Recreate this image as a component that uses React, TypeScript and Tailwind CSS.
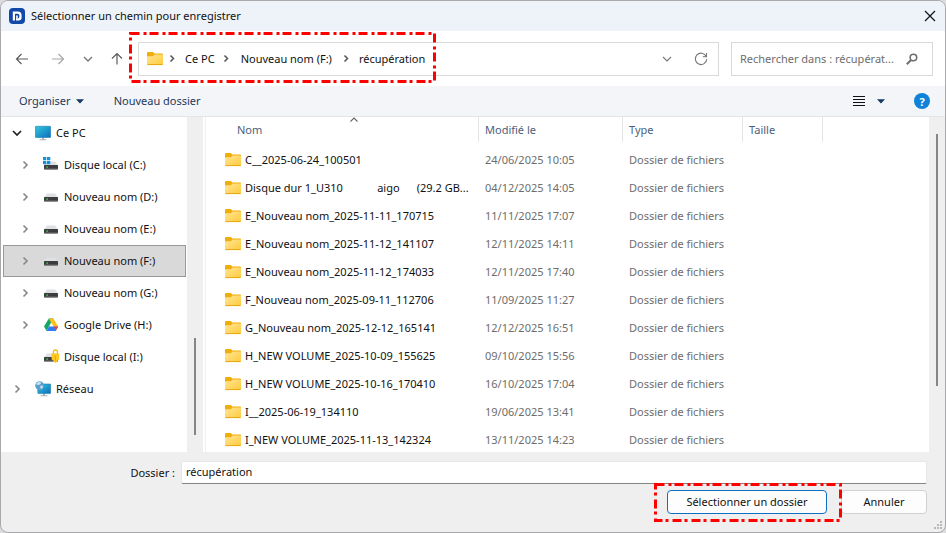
import type { ReactNode } from "react";

const files = [
  ["C__2025-06-24_100501", "24/06/2025 10:05"],
  ["Disque dur 1_U310            aigo      (29.2 GB...", "04/12/2025 14:05"],
  ["E_Nouveau nom_2025-11-11_170715", "11/11/2025 17:07"],
  ["E_Nouveau nom_2025-11-12_141107", "12/11/2025 14:11"],
  ["E_Nouveau nom_2025-11-12_174033", "12/11/2025 17:40"],
  ["F_Nouveau nom_2025-09-11_112706", "11/09/2025 11:27"],
  ["G_Nouveau nom_2025-12-12_165141", "12/12/2025 16:51"],
  ["H_NEW VOLUME_2025-10-09_155625", "09/10/2025 15:56"],
  ["H_NEW VOLUME_2025-10-16_170410", "16/10/2025 17:04"],
  ["I__2025-06-19_134110", "19/06/2025 13:41"],
  ["I_NEW VOLUME_2025-11-13_142324", "13/11/2025 14:23"],
];

function Folder() {
  return (
    <svg width="16" height="14" viewBox="0 0 16 14" className="shrink-0">
      <defs>
        <linearGradient id="folder" x1="0" y1="0" x2="1" y2="1">
          <stop offset="0" stopColor="#ffe596" />
          <stop offset="1" stopColor="#ffcb3d" />
        </linearGradient>
      </defs>
      <path d="M0 1Q0 0 1 0H5.8L7.6 1.6H15Q16 1.6 16 2.6V6H0Z" fill="#f0ad0c" />
      <path d="M0 5Q0 4.2 1 4.2H5.8L7.6 2.4H15Q16 2.4 16 3.2V12Q16 13 15 13H1Q0 13 0 12Z" fill="url(#folder)" />
      <path d="M.4 12.6H15.6" stroke="#e8a613" />
    </svg>
  );
}

function Chevron({ dir, color, width = 1.5 }: { dir: "right" | "down" | "up"; color: string; width?: number }) {
  const d = dir === "right" ? "M3.5 1.5L7 5L3.5 8.5" : dir === "down" ? "M1 3L5 7L9 3" : "M1.5 6.5L5 3L8.5 6.5";
  return (
    <svg width="10" height="10" viewBox="0 0 10 10" fill="none" stroke={color} strokeWidth={width} className="shrink-0">
      <path d={d} />
    </svg>
  );
}

function Crumb() {
  return (
    <svg width="22" height="10" viewBox="0 0 22 10" fill="none" stroke="#555" strokeWidth="1.5" className="shrink-0">
      <path d="M7.5 1.5L10.5 4.5L7.5 7.5" />
    </svg>
  );
}

function Caret() {
  return (
    <svg width="8" height="5" viewBox="0 0 8 5">
      <path d="M0 .3H8L4 4.6Z" fill="#163a64" />
    </svg>
  );
}

function Highlight({ className }: { className: string }) {
  return (
    <svg className={`pointer-events-none absolute ${className}`} aria-hidden="true">
      <rect
        x="1.5"
        y="1.5"
        className="h-[calc(100%-3px)] w-[calc(100%-3px)]"
        fill="none"
        stroke="#fe0000"
        strokeWidth="3"
        strokeDasharray="9 4 3 3"
      />
    </svg>
  );
}

function DriveBody() {
  return (
    <>
      <path d="M3 4.5H11L14 8.4H0Z" fill="#dfe0e2" />
      <rect y="8" width="14" height="4.4" rx=".6" fill="#3a3c3e" />
      <path d="M.3 12H13.7" stroke="#77797b" strokeWidth=".8" />
      <rect x="2.4" y="9.4" width="1.4" height="1.4" fill="#3fdc5a" />
    </>
  );
}

function Drive() {
  return (
    <svg width="16" height="16" viewBox="0 0 16 16">
      <DriveBody />
    </svg>
  );
}

function SystemDrive() {
  return (
    <svg width="16" height="16" viewBox="0 0 16 16" overflow="visible">
      <DriveBody />
      <path d="M-1 0H2.3V3.3H-1ZM3 0H6.3V3.3H3ZM-1 4H2.3V7.3H-1ZM3 4H6.3V7.3H3Z" fill="#1492dc" />
    </svg>
  );
}

function LockedDrive() {
  return (
    <svg width="16" height="16" viewBox="0 0 16 16">
      <DriveBody />
      <path d="M9.4 6V3Q9.4 1 11.4 1Q13.4 1 13.4 3V6" fill="none" stroke="#f2bb1d" strokeWidth="1.3" />
      <path d="M7.6 4.6H15.2V10.5L13.4 11.4V12.6L11.4 14L9.4 12.6V11.4L7.6 10.5Z" fill="#fdc81f" />
      <path d="M11.4 6.5V12" stroke="#e9ab14" />
    </svg>
  );
}

function GoogleDrive() {
  return (
    <svg width="16" height="16" viewBox="0 0 16 16">
      <path d="M4.8 1.4H9.4L7 5.6Z" fill="#0b8043" />
      <path d="M4.8 1.4L7.1 5.6L2.6 14L0 9.6Z" fill="#16a765" />
      <path d="M9.4 1.4L14.2 9.6H9.6L4.8 1.4Z" fill="#fbc116" />
      <path d="M2.6 14L5 9.6H14.2L11.6 14Z" fill="#2f7df6" />
      <path d="M9.6 9.6H14.2L11.9 13.6Z" fill="#ea4335" />
    </svg>
  );
}

function Screen() {
  return (
    <>
      <defs>
        <linearGradient id="screen" x1="0" y1="0" x2="1" y2="1">
          <stop offset="0" stopColor="#35c8dd" />
          <stop offset="1" stopColor="#0b6cbd" />
        </linearGradient>
      </defs>
      <path d="M7 12H9V14.4H7ZM4.5 14.2H11.5V15.2H4.5Z" fill="#a9b4bc" />
    </>
  );
}

function Computer() {
  return (
    <svg width="16" height="16" viewBox="0 0 16 16">
      <Screen />
      <rect x=".3" y="1.3" width="15.4" height="11.2" rx=".8" fill="url(#screen)" stroke="#1580ad" strokeWidth=".6" />
    </svg>
  );
}

function Network() {
  return (
    <svg width="16" height="16" viewBox="0 0 16 16">
      <g transform="translate(1 0)">
        <Screen />
      </g>
      <rect x="2.8" y="3" width="12.9" height="9.6" rx=".8" fill="url(#screen)" stroke="#1580ad" strokeWidth=".6" />
      <circle cx="4.6" cy="4.6" r="4.4" fill="#5b9fc8" />
      <path d="M1 3Q3 .5 5.5 .8L6 2.5L4 4L2 3.8ZM5 5L7.6 4.4L8 6.4L6 8.2Z" fill="#c4e1ef" />
    </svg>
  );
}

type Node = { label: string; icon: ReactNode; root?: boolean; open?: boolean; leaf?: boolean; selected?: boolean };

const tree: Node[] = [
  { label: "Ce PC", icon: <Computer />, root: true, open: true },
  { label: "Disque local (C:)", icon: <SystemDrive /> },
  { label: "Nouveau nom (D:)", icon: <Drive /> },
  { label: "Nouveau nom (E:)", icon: <Drive /> },
  { label: "Nouveau nom (F:)", icon: <Drive />, selected: true },
  { label: "Nouveau nom (G:)", icon: <Drive /> },
  { label: "Google Drive (H:)", icon: <GoogleDrive /> },
  { label: "Disque local (I:)", icon: <LockedDrive />, leaf: true },
  { label: "Réseau", icon: <Network />, root: true },
];

function TreeRow({ node }: { node: Node }) {
  return (
    <li
      className={`flex h-8 items-center border ${node.root ? "pl-2" : "pl-4"} ${
        node.selected ? "border-[#999] bg-[#d9d9d9]" : "border-transparent"
      }`}
    >
      <span className={`flex shrink-0 items-center ${node.root ? "w-[23px]" : "w-6"}`}>
        {!node.leaf && (
          <Chevron dir={node.open ? "down" : "right"} color={node.open ? "#222" : "#8a8a8a"} width={1.7} />
        )}
      </span>
      <button type="button" className={`flex items-center whitespace-nowrap ${node.root ? "gap-[5px]" : "gap-1"}`}>
        {node.icon}
        <span>{node.label}</span>
      </button>
    </li>
  );
}

export default function App() {
  return (
    <div className="h-screen bg-[#dcdcdf] font-['Noto_Sans','Open_Sans',sans-serif] text-[11px] leading-4 text-[#111]">
      <div className="relative flex h-full flex-col overflow-hidden rounded-lg border border-[#a9a9ab] bg-[#efefef]">
        <header className="flex h-[30px] shrink-0 items-center bg-[#eef3f9] pr-[9px] pl-2">
          <svg width="16" height="16" viewBox="0 0 16 16" className="mr-1.5">
            <rect width="16" height="16" rx="4" fill="#1149a8" />
            <path
              d="M3.8 3.6H8.8Q12.6 3.6 12.6 7.4V9.4Q12.6 12.4 9.6 12.4H7V10.4H8.8Q10.4 10.4 10.4 8.8V7.6Q10.4 5.8 8.6 5.8H6V12.4H3.8Z"
              fill="#fff"
            />
            <path d="M7.2 7.4H8.8V9.6Q8.8 11 7.2 11.4Z" fill="#fff" />
          </svg>
          <h1 className="flex-1">Sélectionner un chemin pour enregistrer</h1>
          <button type="button" aria-label="Fermer">
            <svg width="12" height="12" viewBox="0 0 12 12" stroke="#111" strokeWidth="1.2">
              <path d="M1 1L11 11M11 1L1 11" />
            </svg>
          </button>
        </header>

        <nav className="flex h-[55px] shrink-0 items-center bg-white pr-3 pl-3.5">
          <div className="flex w-[123px] shrink-0 items-center">
            <button type="button" aria-label="Précédent" className="mr-[22px]">
              <svg width="14" height="12" viewBox="0 0 14 12" fill="none" stroke="#5c5c5c" strokeWidth="1.2">
                <path d="M13 6H1.5M6.5 1L1.5 6L6.5 11" />
              </svg>
            </button>
            <button type="button" aria-label="Suivant" className="mr-[18px]">
              <svg width="14" height="12" viewBox="0 0 14 12" fill="none" stroke="#a6a6a6" strokeWidth="1.2">
                <path d="M1 6H12.5M7.5 1L12.5 6L7.5 11" />
              </svg>
            </button>
            <button type="button" aria-label="Emplacements récents" className="mr-[18px]">
              <Chevron dir="down" color="#777" width={1.3} />
            </button>
            <button type="button" aria-label="Dossier parent">
              <svg width="12" height="13" viewBox="0 0 12 13" fill="none" stroke="#5c5c5c" strokeWidth="1.2">
                <path d="M6 12.5V1.5M1 6.5L6 1.5L11 6.5" />
              </svg>
            </button>
          </div>
          <div className="relative flex h-[34px] flex-1 items-center border border-[#d9d9d9] pr-2.5 pl-2">
            <Folder />
            <Crumb />
            <button type="button" className="mr-0.5">Ce PC</button>
            <Crumb />
            <button type="button" className="mr-[5px] ml-0.5">Nouveau nom (F:)</button>
            <Crumb />
            <button type="button">récupération</button>
            <button type="button" aria-label="Historique" className="mr-[22px] ml-auto">
              <Chevron dir="down" color="#777" width={1.1} />
            </button>
            <button type="button" aria-label="Actualiser">
              <svg width="14" height="14" viewBox="0 0 14 14" fill="none" stroke="#777" strokeWidth="1.1">
                <path d="M12.2 4.5A5.7 5.7 0 1 0 12.7 7M12.5 1V4.7H8.8" />
              </svg>
            </button>
            <Highlight className="-top-[11px] -left-2.5 h-[51px] w-[307px]" />
          </div>
          <label className="ml-3 flex h-[34px] w-[202px] items-center border border-[#d9d9d9] pr-3.5 pl-2">
            <input
              type="text"
              aria-label="Rechercher"
              placeholder="Rechercher dans : récupérat..."
              className="min-w-0 flex-1 outline-none placeholder:text-[#6d6d6d]"
            />
            <svg width="12" height="12" viewBox="0 0 12 12" fill="none" stroke="#6f6f6f" strokeWidth="1.6">
              <circle cx="7.4" cy="4.5" r="3.3" />
              <path d="M5 7L.8 11.2" strokeWidth="2" />
            </svg>
          </label>
        </nav>

        <div className="flex h-[31px] shrink-0 items-center border-b border-[#e5e5e5] bg-[#f4f5f8] pr-[15px] pl-[18px] text-[#1e395b]">
          <button type="button" className="flex items-center gap-[5px]">
            Organiser <Caret />
          </button>
          <button type="button" className="ml-[30px] flex-1 text-left">Nouveau dossier</button>
          <button type="button" aria-label="Affichage" className="mr-3">
            <svg width="12" height="11" viewBox="0 0 12 11" stroke="#111">
              <path d="M0 .5H12M0 3.5H12M0 6.5H12M0 9.5H12" />
            </svg>
          </button>
          <button type="button" aria-label="Options d'affichage" className="mr-[29px]"><Caret /></button>
          <button
            type="button"
            className="flex size-4 items-center justify-center rounded-full bg-[#0e82d8] leading-none font-bold text-white"
          >
            ?
          </button>
        </div>

        <main className="flex min-h-0 flex-1">
          <aside className="w-[186px] shrink-0 overflow-hidden bg-white pr-px pl-0.5">
            <ul>
              {tree.map((n) => (
                <TreeRow key={n.label} node={n} />
              ))}
            </ul>
          </aside>
          <div className="flex w-4 shrink-0 items-end justify-center pb-[17px]">
            <div className="h-[97px] w-0.5 bg-[#858585]" />
          </div>
          <section className="min-w-0 flex-1 overflow-hidden bg-white pl-0.5">
            <div className="h-full border-l border-[#f0f0f0]">
              <table className="w-full table-fixed border-separate border-spacing-0 text-left">
                <colgroup>
                  <col className="w-[273px]" />
                  <col className="w-36" />
                  <col className="w-[120px]" />
                  <col className="w-20" />
                  <col />
                </colgroup>
                <thead className="text-[#4c607a]">
                  <tr className="h-[25px]">
                    <th scope="col" className="relative border-r border-[#e5e5e5] p-0 pl-[31px] font-normal">
                      Nom
                      <span className="absolute -top-0.5 left-[143px]"><Chevron dir="up" color="#666" width={1.1} /></span>
                    </th>
                    <th scope="col" className="border-r border-[#e5e5e5] p-0 pl-1.5 font-normal">Modifié le</th>
                    <th scope="col" className="border-r border-[#e5e5e5] p-0 pl-1.5 font-normal">Type</th>
                    <th scope="col" className="border-r border-[#e5e5e5] p-0 pl-1.5 font-normal">Taille</th>
                    <td />
                  </tr>
                </thead>
                <tbody className="text-[#6d6d6d]">
                  <tr className="h-1"><td colSpan={5} className="p-0" /></tr>
                  {files.map(([name, date]) => (
                    <tr key={name} className="h-7">
                      <td className="p-0 pl-[19px] text-[#111]">
                        <div className="flex items-center gap-1 whitespace-pre">
                          <Folder />
                          {name}
                        </div>
                      </td>
                      <td className="p-0 pl-1.5">{date}</td>
                      <td className="p-0 pl-1.5">Dossier de fichiers</td>
                      <td className="p-0" />
                      <td className="p-0" />
                    </tr>
                  ))}
                </tbody>
              </table>
            </div>
          </section>
          <div className="flex w-4 shrink-0 justify-center pt-[17px]">
            <div className="h-[252px] w-0.5 bg-[#858585]" />
          </div>
        </main>

        <footer className="relative h-20 shrink-0 pt-[9px] pr-[18px]">
          <div className="flex items-center">
            <label htmlFor="folder-name" className="w-[180px] shrink-0 pr-1.5 text-right">Dossier :</label>
            <input
              id="folder-name"
              type="text"
              defaultValue="récupération"
              className="h-[23px] min-w-0 flex-1 rounded-xs border border-[#e6e6e6] border-b-[#858585] bg-white px-1 pb-0.5 outline-none"
            />
          </div>
          <div className="mt-1.5 flex justify-end gap-3.5">
            <div className="relative">
              <button type="button" className="block h-6 w-40 rounded border border-[#0f6fc5] bg-[#fdfdfd]">
                Sélectionner un dossier
              </button>
              <Highlight className="-top-[7px] -left-[13px] h-[39px] w-[188px]" />
            </div>
            <button type="button" className="h-6 w-[86px] rounded border border-[#d0d0d0] bg-[#fdfdfd]">Annuler</button>
          </div>
          <svg width="10" height="10" viewBox="0 0 10 10" fill="#b9b9b9" className="absolute right-0.5 bottom-0.5">
            <path d="M7 1H9V3H7ZM4 4H6V6H4ZM7 4H9V6H7ZM1 7H3V9H1ZM4 7H6V9H4ZM7 7H9V9H7Z" />
          </svg>
        </footer>
      </div>
    </div>
  );
}
